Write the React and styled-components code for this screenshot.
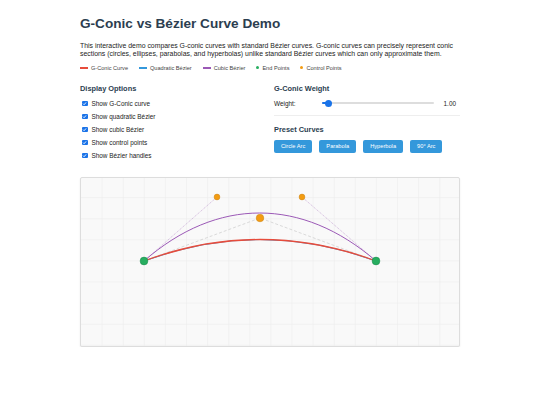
import React from 'react';
import styled, { createGlobalStyle } from 'styled-components';

const GlobalStyle = createGlobalStyle`
	body {
		margin: 0;
		background: #ffffff;
		font-family: "Liberation Sans", Arial, sans-serif;
		color: #333;
	}
`;

const Page = styled.div`
	width: 380px;
	margin: 0 auto;
	padding-top: 16px;
`;

const Title = styled.h1`
	margin: 0 0 10px;
	font-size: 13.6px;
	line-height: 16px;
	font-weight: bold;
	color: #2c3e50;
`;

const Intro = styled.p`
	margin: 0 0 6px;
	font-size: 6.9px;
	line-height: 8.4px;
	color: #222;
`;

const Legend = styled.div`
	display: flex;
	align-items: center;
	gap: 11px;
	margin-bottom: 13px;
	font-size: 5.6px;
	color: #444;
`;

const LegendItem = styled.div`
	display: flex;
	align-items: center;
	gap: 3px;
`;

const Swatch = styled.span`
	display: inline-block;
	width: ${(p) => (p.$dot ? '3px' : '8px')};
	height: ${(p) => (p.$dot ? '3px' : '1.5px')};
	border-radius: ${(p) => (p.$dot ? '50%' : '0')};
	background: ${(p) => p.$color};
`;

const Controls = styled.div`
	display: grid;
	grid-template-columns: 186px 186px;
	column-gap: 8px;
	margin-bottom: 15px;
`;

const Column = styled.div`
	display: flex;
	flex-direction: column;
`;

const Heading = styled.h3`
	margin: 0 0 ${(p) => p.$gap || 4}px;
	font-size: 7.4px;
	line-height: 9px;
	font-weight: bold;
	color: #2c3e50;
`;

const CheckRow = styled.label`
	display: flex;
	align-items: center;
	gap: 4px;
	height: 13px;
	font-size: 6.4px;
	color: #222;
`;

const Box = styled.span`
	display: flex;
	align-items: center;
	justify-content: center;
	width: 5.5px;
	height: 5.5px;
	margin-left: 2px;
	border-radius: 1px;
	background: #1a73e8;
`;

const WeightRow = styled.div`
	display: flex;
	align-items: center;
	height: 13px;
	font-size: 6.4px;
	color: #222;
	padding-bottom: 5px;
	border-bottom: 1px solid #eeeeee;
	margin-bottom: 9px;
`;

const WeightLabel = styled.span`
	width: 48px;
`;

const Track = styled.div`
	position: relative;
	width: 112px;
	height: 2px;
	border-radius: 1px;
	background: #dddddd;
`;

const Fill = styled.div`
	height: 100%;
	border-radius: 1px;
	background: #1a73e8;
`;

const Thumb = styled.div`
	position: absolute;
	top: 50%;
	width: 7px;
	height: 7px;
	margin: -3.5px 0 0 -3.5px;
	border-radius: 50%;
	background: #1a73e8;
`;

const Value = styled.span`
	margin-left: auto;
	padding-right: 4px;
`;

const Buttons = styled.div`
	display: flex;
	gap: 7px;
	margin-top: 1px;
`;

const Button = styled.button`
	height: 13px;
	padding: 0 7px;
	border: none;
	border-radius: 2px;
	background: #3498db;
	color: #ffffff;
	font-family: "Liberation Sans", Arial, sans-serif;
	font-size: 5.7px;
`;

const CanvasBox = styled.div`
	width: 378px;
	height: 168px;
	border: 1px solid #dddddd;
	border-radius: 2px;
	background: #f9f9f9;
	box-shadow: 0 1px 2px rgba(0, 0, 0, 0.08);
	overflow: hidden;
`;

const Check = () => (
	<svg width="5" height="5" viewBox="0 0 10 10">
		<path d="M2 5.2 L4.2 7.4 L8.2 2.8" fill="none" stroke="#fff" strokeWidth="1.8" />
	</svg>
);

const options = [
	'Show G-Conic curve',
	'Show quadratic Bézier',
	'Show cubic Bézier',
	'Show control points',
	'Show Bézier handles',
];

const legend = [
	{ label: 'G-Conic Curve', color: '#e74c3c' },
	{ label: 'Quadratic Bézier', color: '#3498db' },
	{ label: 'Cubic Bézier', color: '#9b59b6' },
	{ label: 'End Points', color: '#27ae60', dot: true },
	{ label: 'Control Points', color: '#f39c12', dot: true },
];

const W = 378;
const H = 168;
const STEP = 21.1;

const CurveCanvas = () => {
	const vLines = [];
	for (let x = STEP; x < W; x += STEP) vLines.push(x);
	const hLines = [];
	for (let y = STEP - 1.5; y < H; y += STEP) hLines.push(y);

	const p0 = [63, 83];
	const p2 = [295, 83];
	const q = [179, 40];
	const c1 = [136, 19];
	const c2 = [221, 19];

	return (
		<CanvasBox>
			<svg width={W} height={H} viewBox={`0 0 ${W} ${H}`}>
				{vLines.map((x) => (
					<line key={'v' + x} x1={x} y1={0} x2={x} y2={H} stroke="#ececec" strokeWidth="0.6" />
				))}
				{hLines.map((y) => (
					<line key={'h' + y} x1={0} y1={y} x2={W} y2={y} stroke="#ececec" strokeWidth="0.6" />
				))}

				{/* handles */}
				<polyline
					points={`${p0} ${q} ${p2}`}
					fill="none"
					stroke="#c4c4c4"
					strokeWidth="0.6"
					strokeDasharray="3 2"
				/>
				<line x1={p0[0]} y1={p0[1]} x2={c1[0]} y2={c1[1]} stroke="#b58ac8" strokeWidth="0.6" strokeDasharray="1 1" />
				<line x1={c2[0]} y1={c2[1]} x2={p2[0]} y2={p2[1]} stroke="#b58ac8" strokeWidth="0.6" strokeDasharray="1 1" />

				{/* curves */}
				<path d={`M${p0} C${c1} ${c2} ${p2}`} fill="none" stroke="#9b59b6" strokeWidth="1" />
				<path d={`M${p0} Q${q} ${p2}`} fill="none" stroke="#3498db" strokeWidth="1" />
				<path d={`M${p0} Q${q} ${p2}`} fill="none" stroke="#e74c3c" strokeWidth="1.3" />

				{/* points */}
				<circle cx={c1[0]} cy={c1[1]} r="2.9" fill="#f39c12" stroke="#c98316" strokeWidth="0.5" />
				<circle cx={c2[0]} cy={c2[1]} r="2.9" fill="#f39c12" stroke="#c98316" strokeWidth="0.5" />
				<circle cx={q[0]} cy={q[1]} r="3.8" fill="#f39c12" stroke="#c98316" strokeWidth="0.5" />
				<circle cx={p0[0]} cy={p0[1]} r="3.9" fill="#27ae60" stroke="#1f8b4d" strokeWidth="0.5" />
				<circle cx={p2[0]} cy={p2[1]} r="3.9" fill="#27ae60" stroke="#1f8b4d" strokeWidth="0.5" />
			</svg>
		</CanvasBox>
	);
};

const App = () => {
	const fillPct = 6;

	return (
		<>
			<GlobalStyle />
			<Page>
				<Title>G-Conic vs Bézier Curve Demo</Title>
				<Intro>
					This interactive demo compares G-conic curves with standard Bézier curves. G-conic curves can
					precisely represent conic sections (circles, ellipses, parabolas, and hyperbolas) unlike standard
					Bézier curves which can only approximate them.
				</Intro>
				<Legend>
					{legend.map((item) => (
						<LegendItem key={item.label}>
							<Swatch $color={item.color} $dot={item.dot} />
							{item.label}
						</LegendItem>
					))}
				</Legend>

				<Controls>
					<Column>
						<Heading>Display Options</Heading>
						{options.map((label) => (
							<CheckRow key={label}>
								<Box>
									<Check />
								</Box>
								{label}
							</CheckRow>
						))}
					</Column>
					<Column>
						<Heading>G-Conic Weight</Heading>
						<WeightRow>
							<WeightLabel>Weight:</WeightLabel>
							<Track>
								<Fill style={{ width: `${fillPct}%` }} />
								<Thumb style={{ left: `${fillPct}%` }} />
							</Track>
							<Value>1.00</Value>
						</WeightRow>
						<Heading $gap={5}>Preset Curves</Heading>
						<Buttons>
							<Button>Circle Arc</Button>
							<Button>Parabola</Button>
							<Button>Hyperbola</Button>
							<Button>90° Arc</Button>
						</Buttons>
					</Column>
				</Controls>

				<CurveCanvas />
			</Page>
		</>
	);
};

export default App;
